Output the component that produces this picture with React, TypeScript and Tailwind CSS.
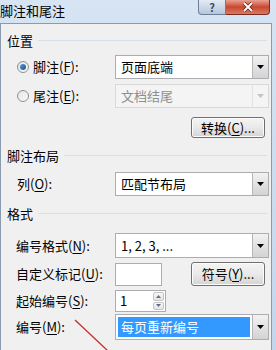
import React from 'react';

const font = { fontFamily: '"Noto Sans CJK SC", "Microsoft YaHei", sans-serif' };

const Key: React.FC<{ k: string }> = ({ k }) => <span className="underline underline-offset-2">{k}</span>;

const Arrow: React.FC<{ disabled?: boolean }> = ({ disabled }) => (
  <div
    className={`w-[16px] h-full flex items-center justify-center border-l ${
      disabled ? 'border-[#e3e3e3] bg-[#f4f4f4]' : 'border-[#b6b6b6] bg-gradient-to-b from-[#f2f2f2] to-[#d3d3d3]'
    }`}
  >
    <svg width="7" height="4" viewBox="0 0 7 4">
      <path d="M0 0 H7 L3.5 4 Z" fill={disabled ? '#c4c4c4' : '#000'} />
    </svg>
  </div>
);

const Select: React.FC<{ value: string; disabled?: boolean; selected?: boolean; h?: string }> = ({
  value,
  disabled,
  selected,
  h = 'h-[24px]',
}) => (
  <div
    className={`w-[154px] ${h} flex border ${
      disabled ? 'border-[#d9d9d9] bg-[#f4f4f4]' : 'border-[#abadb3] bg-white'
    }`}
  >
    <div className="flex-1 flex items-center p-[2px]">
      <div
        className={`w-full h-full flex items-center pl-[3px] text-[13px] ${
          selected ? 'bg-[#3399ff] text-white' : disabled ? 'text-[#8e8e8e]' : 'text-black'
        }`}
      >
        {value}
      </div>
    </div>
    <Arrow disabled={disabled} />
  </div>
);

const Button: React.FC<{ children: React.ReactNode; h?: string }> = ({ children, h = 'h-[21px]' }) => (
  <div
    className={`w-[74px] ${h} flex items-center justify-center rounded-[3px] border border-[#707070] bg-gradient-to-b from-[#f4f4f4] via-[#e9e9e9] to-[#d4d4d4] text-[13px] text-black shadow-[inset_0_0_0_1px_#fcfcfc]`}
  >
    {children}
  </div>
);

const Heading: React.FC<{ text: string; mt: string }> = ({ text, mt }) => (
  <div className={`${mt} h-[16px] flex items-center pl-[6px] pr-[4px]`}>
    <span className="text-[13px] text-black leading-none">{text}</span>
    <div className="flex-1 ml-[5px] border-t border-[#d5dfe5]" />
  </div>
);

const Row: React.FC<{ mt: string; h: string; label: React.ReactNode; children: React.ReactNode }> = ({
  mt,
  h,
  label,
  children,
}) => (
  <div className={`${mt} ${h} flex items-center`}>
    <div className="w-[114px] pl-[15px] text-[13px] text-black">{label}</div>
    {children}
  </div>
);

const Radio: React.FC<{ checked?: boolean }> = ({ checked }) => (
  <div className="w-[12px] h-[12px] rounded-full border border-[#8e8f8f] bg-gradient-to-br from-[#e4e4e4] to-[#fafafa] flex items-center justify-center">
    {checked && <div className="w-[6px] h-[6px] rounded-full bg-gradient-to-br from-[#5a9ad8] to-[#1b4f8f]" />}
  </div>
);

export default function App() {
  return (
    <div className="w-[276px] h-[350px] overflow-hidden relative bg-gradient-to-b from-[#d6e4f3] to-[#c3d6ec]" style={font}>
      {/* title bar */}
      <div className="h-[23px] flex items-start">
        <div className="pt-[2px] text-[13px] text-black leading-[18px]">脚注和尾注</div>
        <div className="flex-1" />
        <div className="flex mr-[6px]">
          <div className="w-[28px] h-[15px] rounded-bl-[4px] border border-[#6d7f96] border-t-0 bg-gradient-to-b from-[#e3ebf4] to-[#b7c6d9] flex items-center justify-center">
            <span className="text-[11px] leading-none text-[#3b4a5c] font-bold">?</span>
          </div>
          <div className="w-[44px] h-[15px] rounded-br-[4px] border border-[#7a2c22] border-t-0 border-l-0 bg-gradient-to-b from-[#e8a092] via-[#c9462f] to-[#d67a5f] flex items-center justify-center">
            <svg width="12" height="10" viewBox="0 0 12 10">
              <path d="M2 1 L10 9 M10 1 L2 9" stroke="#5a1d14" strokeWidth="3.4" />
              <path d="M2 1 L10 9 M10 1 L2 9" stroke="#fff" strokeWidth="2" />
            </svg>
          </div>
        </div>
      </div>

      {/* client area */}
      <div className="w-[272px] h-[340px] border border-[#8a9bb0] bg-[#f0f0f0] flex flex-col">
        <Heading text="位置" mt="mt-[8px]" />

        <div className="mt-[7px] h-[24px] flex items-center">
          <div className="w-[114px] pl-[16px] flex items-center gap-[4px] text-[13px] text-black">
            <Radio checked />
            <span>
              脚注(<Key k="F" />):
            </span>
          </div>
          <Select value="页面底端" />
        </div>

        <div className="mt-[5px] h-[24px] flex items-center">
          <div className="w-[114px] pl-[16px] flex items-center gap-[4px] text-[13px] text-black">
            <Radio />
            <span>
              尾注(<Key k="E" />):
            </span>
          </div>
          <Select value="文档结尾" disabled />
        </div>

        <div className="mt-[9px] h-[21px] flex justify-end pr-[6px]">
          <Button>
            <span>
              转换(<Key k="C" />)...
            </span>
          </Button>
        </div>

        <Heading text="脚注布局" mt="mt-[9px]" />

        <Row
          mt="mt-[9px]"
          h="h-[24px]"
          label={
            <span className="pl-[1px]">
              列(<Key k="O" />):
            </span>
          }
        >
          <Select value="匹配节布局" />
        </Row>

        <Heading text="格式" mt="mt-[9px]" />

        <Row
          mt="mt-[12px]"
          h="h-[25px]"
          label={
            <span>
              编号格式(<Key k="N" />):
            </span>
          }
        >
          <Select value="1, 2, 3, ..." h="h-[25px]" />
        </Row>

        <Row
          mt="mt-[4px]"
          h="h-[24px]"
          label={
            <span>
              自定义标记(<Key k="U" />):
            </span>
          }
        >
          <div className="w-[47px] h-[23px] border border-[#abadb3] bg-white" />
          <div className="flex-1" />
          <div className="pr-[6px]">
            <Button h="h-[24px]">
              <span>
                符号(<Key k="Y" />)...
              </span>
            </Button>
          </div>
        </Row>

        <Row
          mt="mt-[4px]"
          h="h-[22px]"
          label={
            <span>
              起始编号(<Key k="S" />):
            </span>
          }
        >
          <div className="w-[51px] h-[22px] border border-[#abadb3] bg-white flex">
            <div className="flex-1 flex items-center pl-[4px] text-[13px] text-black">1</div>
            <div className="w-[13px] flex flex-col p-[1px] gap-[1px]">
              <div className="flex-1 border border-[#c5c5c5] rounded-[2px] bg-gradient-to-b from-[#f7f7f7] to-[#e3e3e3] flex items-center justify-center">
                <svg width="5" height="3" viewBox="0 0 5 3">
                  <path d="M0 3 H5 L2.5 0 Z" fill="#5f6f85" />
                </svg>
              </div>
              <div className="flex-1 border border-[#c5c5c5] rounded-[2px] bg-gradient-to-b from-[#f7f7f7] to-[#e3e3e3] flex items-center justify-center">
                <svg width="5" height="3" viewBox="0 0 5 3">
                  <path d="M0 0 H5 L2.5 3 Z" fill="#5f6f85" />
                </svg>
              </div>
            </div>
          </div>
        </Row>

        <Row
          mt="mt-[2px]"
          h="h-[26px]"
          label={
            <span>
              编号(<Key k="M" />):
            </span>
          }
        >
          <Select value="每页重新编号" selected h="h-[26px]" />
        </Row>
      </div>

      {/* annotation line */}
      <svg className="absolute left-0 top-0 pointer-events-none" width="276" height="350">
        <line x1="75" y1="320" x2="108" y2="351" stroke="#c0322a" strokeWidth="1.3" />
      </svg>
    </div>
  );
}
